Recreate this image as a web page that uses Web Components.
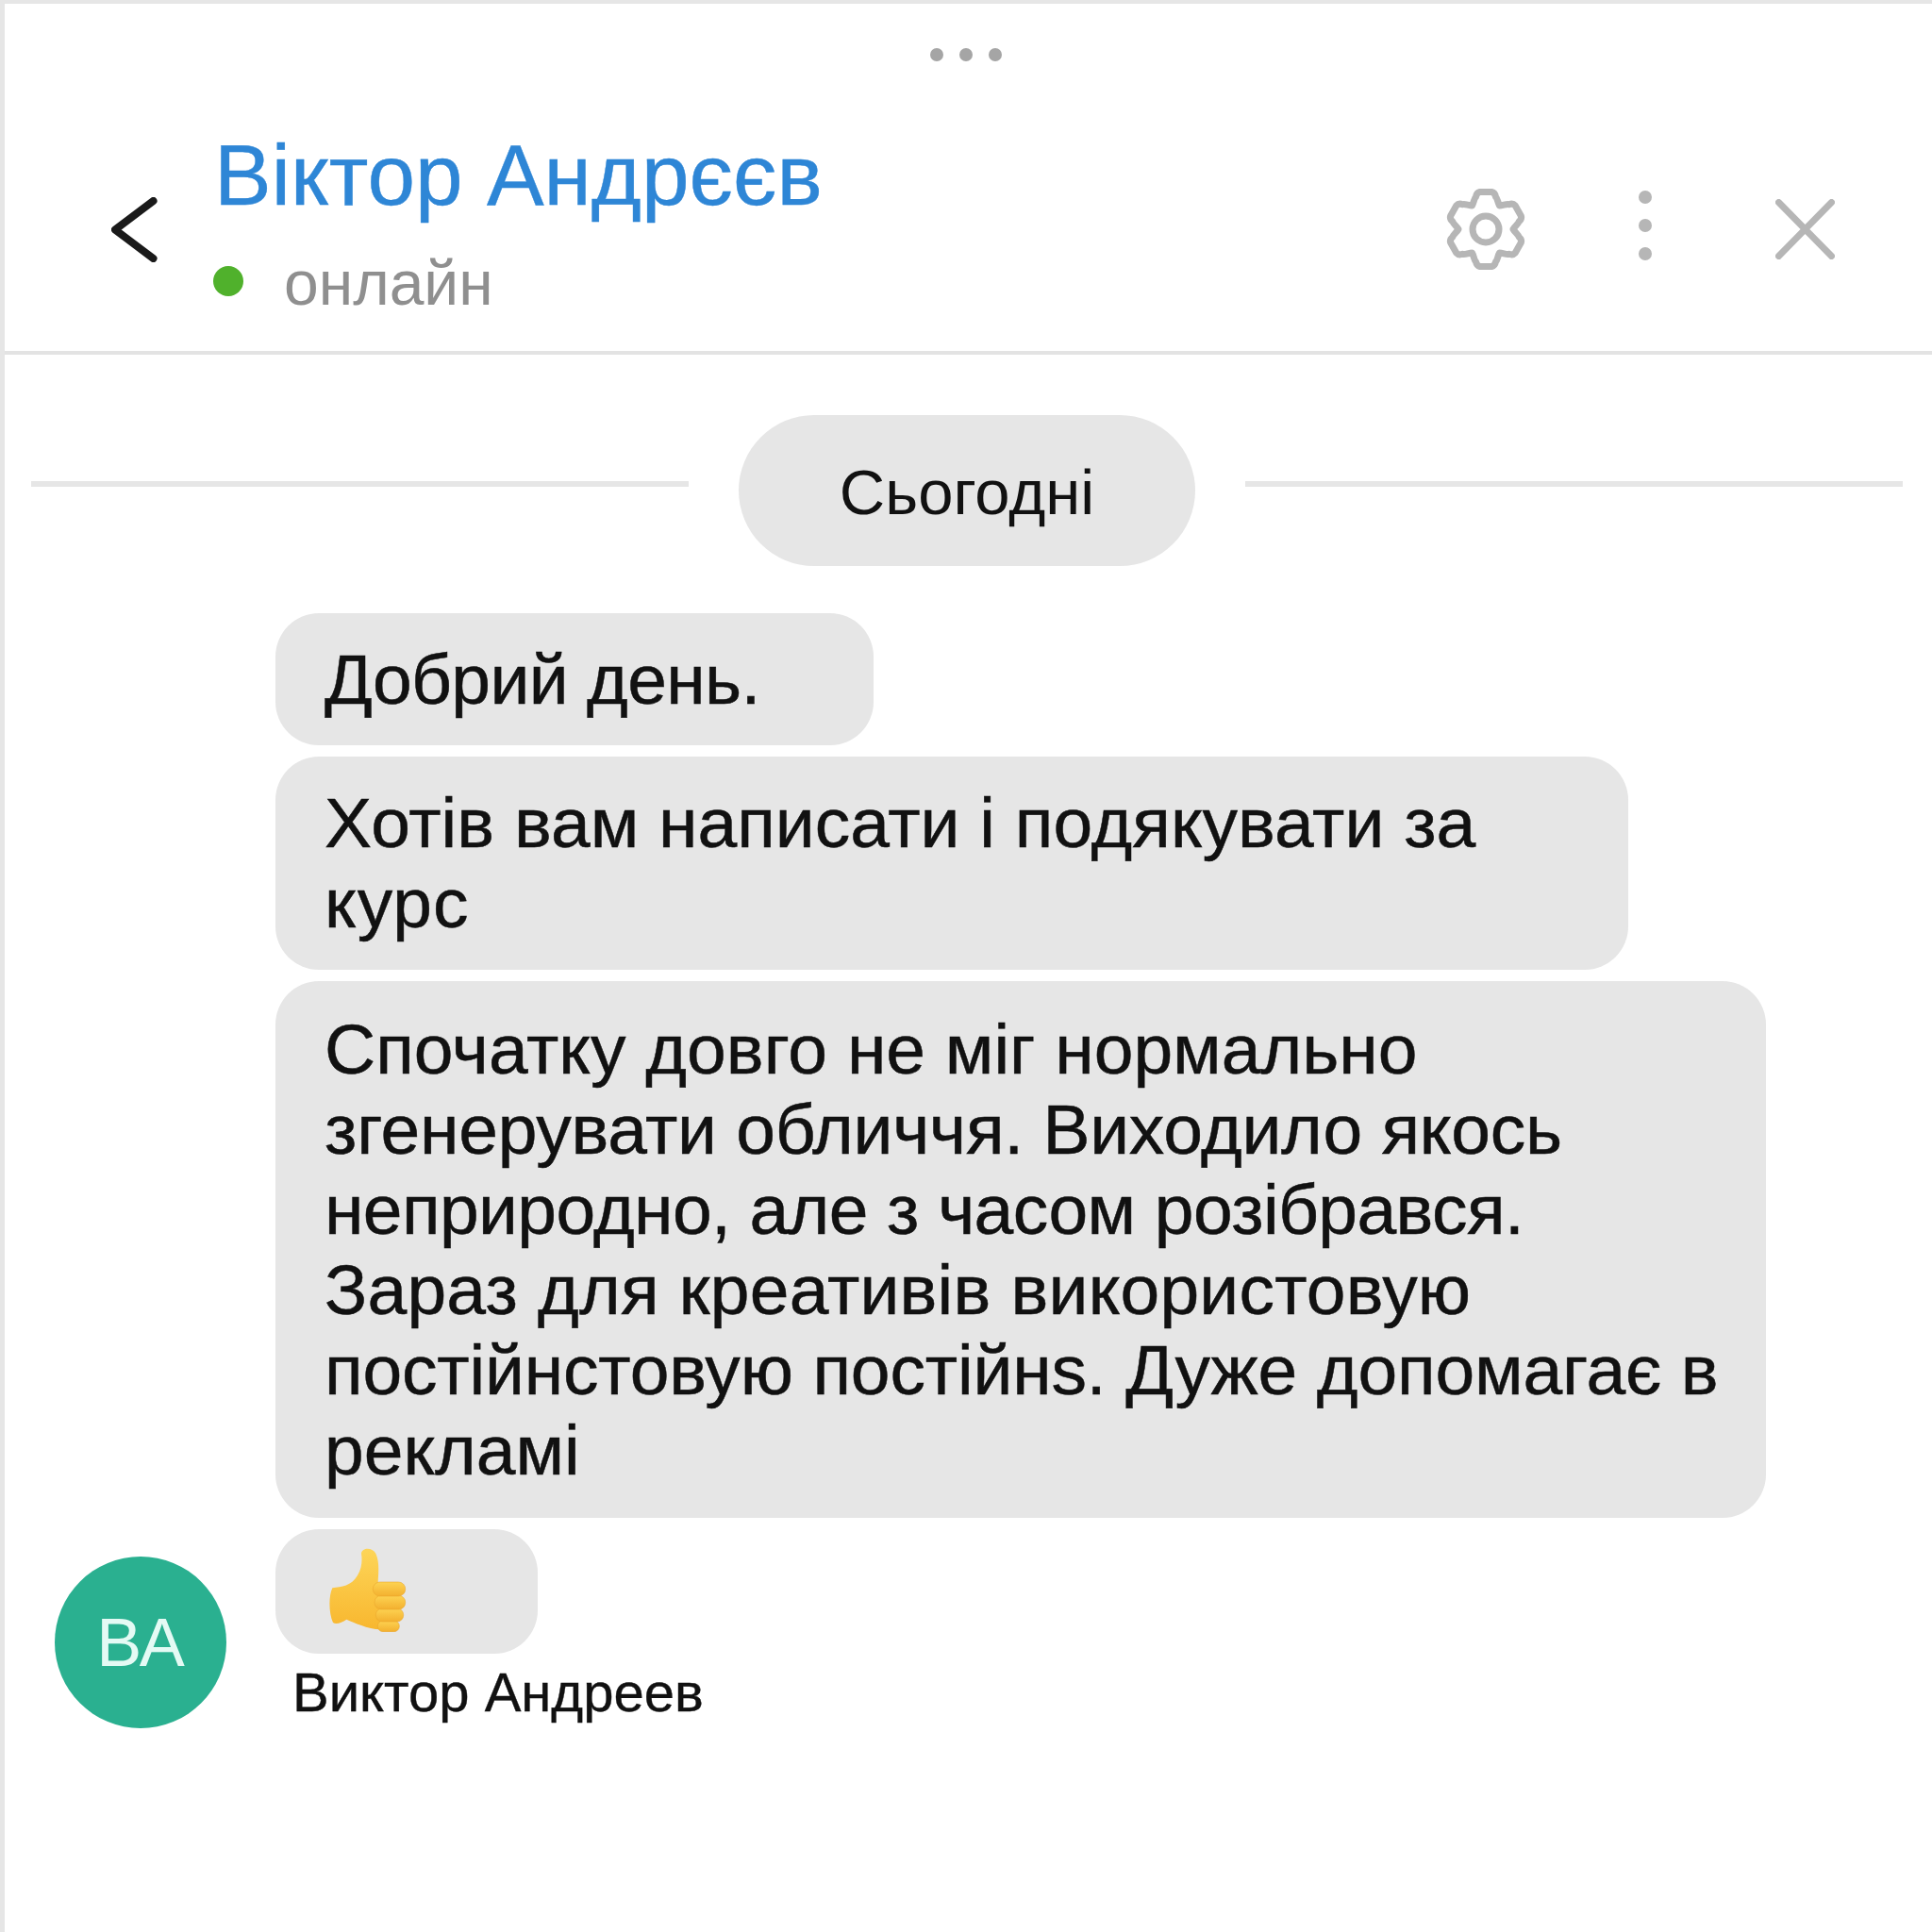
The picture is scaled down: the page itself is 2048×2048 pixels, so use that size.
<!DOCTYPE html>
<html lang="uk">
<head>
<meta charset="utf-8">
<title>Чат</title>
<style>
  html, body { margin: 0; padding: 0; background: #fff; }
  body { font-family: "Liberation Sans", Arial, sans-serif; }
</style>
</head>
<body>
<chat-window>
  <chat-header name="Віктор Андрєєв" status="онлайн"></chat-header>
  <date-divider>Сьогодні</date-divider>
  <message-group initials="ВА" sender="Виктор Андреев">
    <message-bubble width="634" pad="27.5"><span style="letter-spacing:-.65px">Добрий день.</span></message-bubble>
    <message-bubble width="1434" pad="28">Хотів вам написати і подякувати за<br><span style="letter-spacing:1px">курс</span></message-bubble>
    <message-bubble width="1580" pad="29.5">Спочатку довго не міг нормально<br><span style="letter-spacing:-.26px">згенерувати обличчя. Виходило якось</span><br><span style="letter-spacing:-.6px">неприродно, але з часом розібрався.</span><br><span style="letter-spacing:.2px">Зараз для креативів використовую</span><br><span style="letter-spacing:-.16px">постійнстовую постійнs. Дуже допомагає в</span><br>рекламі</message-bubble>
    <message-bubble width="278" height="132"><thumbs-up></thumbs-up></message-bubble>
  </message-group>
</chat-window>

<script>
// Fenêtre principale
class ChatWindow extends HTMLElement {
  constructor() {
    super();
    const shadow = this.attachShadow({ mode: 'open' });
    shadow.innerHTML = `
      <style>
        :host {
          display: block;
          box-sizing: border-box;
          width: 2048px;
          height: 2048px;
          border-top: 4px solid #e6e6e6;
          border-left: 5px solid #e6e6e6;
          background: #fff;
          color: #111;
        }
      </style>
      <slot></slot>
    `;
  }
}
customElements.define('chat-window', ChatWindow)


// Icône engrenage, six dents
class GearIcon extends HTMLElement {
  constructor() {
    super();
    const shadow = this.attachShadow({ mode: 'open' });
    let d = '';
    for (let k = 0; k < 6; k++) {
      const a = (k * 60 - 90) * Math.PI / 180;
      const pt = (r, da) => {
        const x = r * Math.cos(a + da * Math.PI / 180);
        const y = r * Math.sin(a + da * Math.PI / 180);
        return x.toFixed(1) + ' ' + y.toFixed(1);
      };
      d += (k ? 'L' : 'M') + pt(29, -30) + ' C' + pt(31, -24) + ' ' + pt(35, -21) + ' ' + pt(36, -17)
        + ' Q' + pt(40, -14) + ' ' + pt(40, -9) + ' L' + pt(40, 9)
        + ' Q' + pt(40, 14) + ' ' + pt(36, 17) + ' C' + pt(35, 21) + ' ' + pt(31, 24) + ' ' + pt(29, 30) + ' ';
    }
    shadow.innerHTML = `
      <style>
        :host { display: block; width: 90px; height: 92px; }
        svg { display: block; }
      </style>
      <svg width="90" height="92" viewBox="-45 -46 90 92" fill="none" stroke="#b6b6b6" stroke-width="7" stroke-linejoin="round">
        <path d="${d}Z"/>
        <circle r="14"/>
      </svg>
    `;
  }
}
customElements.define('gear-icon', GearIcon)


// Pouce levé dessiné en SVG
class ThumbsUp extends HTMLElement {
  constructor() {
    super();
    const shadow = this.attachShadow({ mode: 'open' });
    shadow.innerHTML = `
      <style>
        :host { display: block; width: 82px; height: 90px; }
        svg { display: block; }
      </style>
      <svg width="82" height="90" viewBox="60 60 246 270">
        <defs>
          <linearGradient id="h" x1="0" y1="0" x2="0" y2="1">
            <stop offset="0" stop-color="#fdd558"/>
            <stop offset="1" stop-color="#f8b72f"/>
          </linearGradient>
          <linearGradient id="f" x1="0" y1="0" x2="0" y2="1">
            <stop offset="0" stop-color="#fdd352"/>
            <stop offset="1" stop-color="#f3b02f"/>
          </linearGradient>
        </defs>
        <path fill="url(#h)" d="M70 190C100 186 130 184 150 150C165 125 165 100 162 80C165 60 197 60 208 80C222 110 215 150 215 175L240 280L224 322C180 320 140 300 115 290C100 300 82 308 72 300C58 270 58 215 70 190Z"/>
        <g fill="url(#f)" stroke="#eaa62c" stroke-opacity=".55" stroke-width="3">
          <rect x="214" y="294" width="69" height="35" rx="17"/>
          <rect x="208" y="255" width="88" height="42" rx="20"/>
          <rect x="204" y="214" width="98" height="44" rx="21"/>
          <rect x="199" y="171" width="103" height="45" rx="22"/>
        </g>
      </svg>
    `;
  }
}
customElements.define('thumbs-up', ThumbsUp)


// En-tête : points, retour, nom, statut, actions
class ChatHeader extends HTMLElement {
  constructor() {
    super();
    const shadow = this.attachShadow({ mode: 'open' });
    const name = this.getAttribute('name');
    const status = this.getAttribute('status');
    shadow.innerHTML = `
      <style>
        :host {
          display: block;
          box-sizing: border-box;
          height: 372px;
          border-bottom: 4px solid #e3e3e3;
        }
        .grip {
          display: flex;
          justify-content: center;
          gap: 17px;
          padding-top: 47px;
          margin-left: -5px;
        }
        .grip i {
          width: 14px;
          height: 14px;
          border-radius: 50%;
          background: #a5a5a5;
        }
        .bar {
          display: flex;
          align-items: flex-start;
          padding-top: 71px;
        }
        .back {
          display: block;
          margin: 73px 0 0 113px;
          flex: none;
        }
        .who {
          margin-left: 60px;
        }
        .name {
          font-size: 91px;
          line-height: 100px;
          color: #2e86d6;
          white-space: nowrap;
          -webkit-text-stroke: 0.4px #2e86d6;
        }
        .status {
          display: flex;
          align-items: center;
          margin-top: 29px;
          font-size: 66px;
          line-height: 70px;
          color: #8f8f8f;
        }
        .dot {
          width: 32px;
          height: 32px;
          margin: -5px 43px 0 -1px;
          border-radius: 50%;
          background: #50b12c;
        }
        .actions {
          display: flex;
          align-items: center;
          margin-left: auto;
          padding-top: 61px;
        }
        .more {
          display: flex;
          flex-direction: column;
          gap: 16px;
          margin: -8px 131px 0 117px;
        }
        .more i {
          width: 14px;
          height: 14px;
          border-radius: 50%;
          background: #b6b6b6;
        }
        .close {
          display: block;
          margin-right: 103px;
        }
      </style>
      <div class="grip"><i></i><i></i><i></i></div>
      <div class="bar">
        <svg class="back" width="49" height="69" viewBox="0 0 49 69" fill="none" stroke="#1a1a1a" stroke-width="8" stroke-linecap="round" stroke-linejoin="round">
          <path d="M44.5 4L4 34.5L44.5 65"/>
        </svg>
        <div class="who">
          <div class="name">${name}</div>
          <div class="status"><span class="dot"></span><span>${status}</span></div>
        </div>
        <div class="actions">
          <gear-icon></gear-icon>
          <div class="more"><i></i><i></i><i></i></div>
          <svg class="close" width="63" height="64" viewBox="0 0 63 64" stroke="#b6b6b6" stroke-width="7" stroke-linecap="round">
            <path d="M3.5 3.5L59.5 60.5M59.5 3.5L3.5 60.5"/>
          </svg>
        </div>
      </div>
    `;
  }
}
customElements.define('chat-header', ChatHeader)


// Séparateur de date
class DateDivider extends HTMLElement {
  constructor() {
    super();
    const shadow = this.attachShadow({ mode: 'open' });
    shadow.innerHTML = `
      <style>
        :host {
          display: flex;
          align-items: flex-start;
          padding: 64px 31px 0 28px;
        }
        .line {
          flex: 1;
          height: 6px;
          margin-top: 70px;
          background: #e6e6e6;
        }
        .pill {
          box-sizing: border-box;
          width: 484px;
          height: 160px;
          margin: 0 53px;
          border-radius: 80px;
          background: #e6e6e6;
          font-size: 67px;
          line-height: 164px;
          text-align: center;
        }
      </style>
      <div class="line"></div>
      <div class="pill"><slot></slot></div>
      <div class="line"></div>
    `;
  }
}
customElements.define('date-divider', DateDivider)


// Groupe de messages avec avatar à gauche
class MessageGroup extends HTMLElement {
  constructor() {
    super();
    const shadow = this.attachShadow({ mode: 'open' });
    shadow.innerHTML = `
      <style>
        :host {
          display: grid;
          grid-template-columns: 287px 1fr;
          padding-top: 50px;
        }
        .avatar {
          align-self: end;
          justify-self: start;
          width: 182px;
          height: 182px;
          margin-left: 53px;
          border-radius: 50%;
          background: #2ab090;
          color: #e4faf4;
          font-size: 72px;
          line-height: 182px;
          text-align: center;
        }
        .stack {
          display: flex;
          flex-direction: column;
          align-items: flex-start;
          gap: 12px;
        }
        .sender {
          margin: -6px 0 0 18px;
          padding-bottom: 3px;
          font-size: 58px;
          line-height: 70px;
          -webkit-text-stroke: 0.4px #111;
        }
      </style>
      <div class="avatar">${this.getAttribute('initials')}</div>
      <div class="stack">
        <slot></slot>
        <div class="sender">${this.getAttribute('sender')}</div>
      </div>
    `;
  }
}
customElements.define('message-group', MessageGroup)


// Bulle de message
class MessageBubble extends HTMLElement {
  constructor() {
    super();
    const shadow = this.attachShadow({ mode: 'open' });
    const pad = this.getAttribute('pad') || 28;
    shadow.innerHTML = `
      <style>
        :host {
          display: block;
          box-sizing: border-box;
          padding: ${pad}px 40px ${pad}px 52px;
          border-radius: 46px;
          background: #e6e6e6;
          font-size: 75px;
          line-height: 85px;
          white-space: nowrap;
          -webkit-text-stroke: 0.5px #111;
        }
      </style>
      <slot></slot>
    `;
    this.style.width = this.getAttribute('width') + 'px';
    if (this.getAttribute('height')) {
      this.style.height = this.getAttribute('height') + 'px';
      this.style.paddingTop = '19px';
      this.style.paddingLeft = '57px';
    }
  }
}
customElements.define('message-bubble', MessageBubble)
</script>
</body>
</html>
